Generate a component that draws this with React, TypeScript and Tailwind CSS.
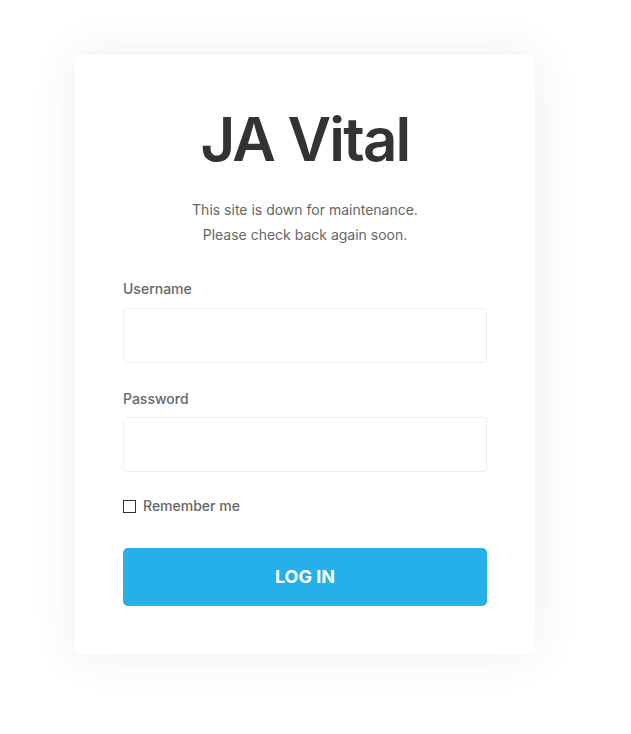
export default function App() {
  return (
    <main className="min-h-screen bg-white font-['Inter',sans-serif]">
      <div className="pt-[55px] pl-[75px]">
        {/* Login card */}
        <div className="w-[460px] rounded bg-white px-12 pt-12 pb-12 shadow-[0_0_45px_rgba(60,60,140,0.09)]">
          <h1 className="text-center text-[60px] font-semibold leading-[72px] tracking-[-1.8px] text-[#333333]">
            JA Vital
          </h1>
          <p className="mt-[22px] text-center text-sm leading-[25px] text-[#666666]">
            This site is down for maintenance.
            <br />
            Please check back again soon.
          </p>

          <form className="mt-[32px] flex flex-col" onSubmit={(e) => e.preventDefault()}>
            <label className="text-sm font-medium leading-5 text-[#666666]">Username</label>
            <input
              type="text"
              className="mt-[9px] h-[55px] w-full rounded border border-[#eeeeee] bg-white px-3 outline-none"
            />

            <label className="mt-[26px] text-sm font-medium leading-5 text-[#666666]">Password</label>
            <input
              type="password"
              className="mt-[8px] h-[55px] w-full rounded border border-[#eeeeee] bg-white px-3 outline-none"
            />

            <label className="mt-[24px] flex items-center gap-[7px] text-sm font-medium leading-5 text-[#666666]">
              <span className="block h-[13px] w-[13px] border border-[#333333] bg-white" />
              Remember me
            </label>

            <button
              type="submit"
              className="mt-[32px] h-[58px] w-full rounded-[5px] bg-[#25b0ea] text-lg font-bold text-white"
            >
              LOG IN
            </button>
          </form>
        </div>
      </div>
    </main>
  );
}
